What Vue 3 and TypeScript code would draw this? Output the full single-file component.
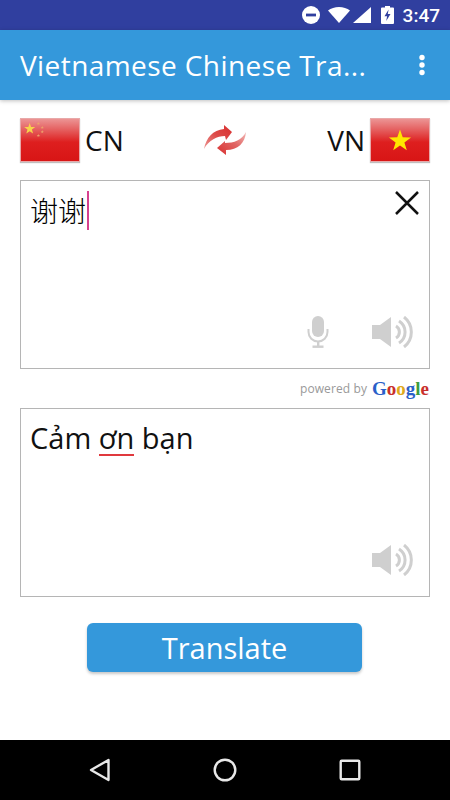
<template>
  <div class="screen">
    <!-- status bar -->
    <div class="status">
      <svg class="st-dnd" viewBox="0 0 18 18" width="18" height="18">
        <circle cx="9" cy="9" r="9" fill="#fff" />
        <rect x="4" y="7.600" width="10" height="2.800" fill="#303f9f" />
      </svg>
      <svg class="st-wifi" viewBox="0 0 22 16" width="22" height="16">
        <path d="M0 3.600C3 1.200 6.800 0 11 0s8 1.200 11 3.600L11 16z" fill="#fff" />
      </svg>
      <svg class="st-signal" viewBox="0 0 18 16" width="18" height="16">
        <path d="M0 16L18 0v16z" fill="#fff" />
      </svg>
      <svg class="st-batt" viewBox="0 0 13 18" width="13" height="18">
        <path d="M4 0h5v1.600h3a1 1 0 0 1 1 1V17a1 1 0 0 1-1 1H1a1 1 0 0 1-1-1V2.600a1 1 0 0 1 1-1h3z" fill="#fff" />
        <path d="M7.600 3.500L3.500 10.200h2.600L5.200 15l4.300-7H6.800z" fill="#303f9f" />
      </svg>
      <span class="st-time">3:47</span>
    </div>

    <!-- app bar -->
    <header class="appbar">
      <h1 class="title">Vietnamese Chinese Tra...</h1>
      <svg class="more" viewBox="0 0 6 24" width="6" height="24">
        <circle cx="3" cy="4.500" r="2.700" fill="#fff" />
        <circle cx="3" cy="12" r="2.700" fill="#fff" />
        <circle cx="3" cy="19.500" r="2.700" fill="#fff" />
      </svg>
    </header>

    <main class="content">
      <!-- language row -->
      <div class="langs">
        <div class="lang">
          <div class="flag">
            <svg viewBox="0 0 60 44" width="58" height="43">
              <polygon v-for="s in cnStars" :key="s.x + s.y" :points="starPoints(s.x, s.y, s.r)" :fill="s.c" />
            </svg>
          </div>
          <span>CN</span>
        </div>
        <svg class="swap" viewBox="7 8 46 33" width="46" height="33">
          <defs>
            <linearGradient id="arrowA" x1="0" y1="1" x2="1" y2="0">
              <stop offset="0" stop-color="#ee9a98" />
              <stop offset="0.5" stop-color="#dd4b49" />
              <stop offset="1" stop-color="#d92f2f" />
            </linearGradient>
            <linearGradient id="arrowB" x1="1" y1="0" x2="0" y2="1">
              <stop offset="0" stop-color="#f3b9b7" />
              <stop offset="0.45" stop-color="#e06563" />
              <stop offset="1" stop-color="#d92f2f" />
            </linearGradient>
          </defs>
          <path d="M9 33C11 22 18 14 29 13L29 9L37 16L31 24L30 20C22 20 14 24 9 33z" fill="url(#arrowA)" />
          <path d="M51 16C50 27 43 34 31 34L31 39L22 32L30 25L30 27C39 27 47 24 51 16z" fill="url(#arrowB)" />
        </svg>
        <div class="lang">
          <span>VN</span>
          <div class="flag">
            <svg viewBox="0 0 60 44" width="58" height="43">
              <polygon :points="starPoints(30, 22.500, 12)" fill="#ffe600" />
            </svg>
          </div>
        </div>
      </div>

      <!-- source box -->
      <section class="box">
        <div class="text cjk">谢谢<i class="caret"></i></div>
        <svg class="clear" viewBox="0 0 26 26" width="26" height="26">
          <path d="M2 2l22 22M24 2L2 24" stroke="#111" stroke-width="2.500" fill="none" />
        </svg>
        <div class="tools">
          <svg viewBox="0 0 22 32" width="22" height="32">
            <rect x="5" y="0" width="12" height="21" rx="6" fill="#cfcfcf" />
            <path d="M1.500 13v3a9.500 9.500 0 0 0 19 0v-3" fill="none" stroke="#cfcfcf" stroke-width="2" />
            <rect x="10" y="25" width="2.400" height="5" fill="#cfcfcf" />
            <rect x="5.500" y="29.500" width="11" height="2.400" fill="#cfcfcf" />
          </svg>
          <svg class="speaker" viewBox="0 0 42 32" width="42" height="32">
            <path d="M0 9h8L19 1v30L8 23H0z" fill="#cfcfcf" />
            <path d="M24 10a7 7 0 0 1 0 12M27 5a13 13 0 0 1 0 22M32 1a19 19 0 0 1 0 30" fill="none" stroke="#cfcfcf" stroke-width="3" />
          </svg>
        </div>
      </section>

      <div class="powered">
        <span>powered by</span>
        <b class="google"><i class="g-b">G</i><i class="g-r">o</i><i class="g-y">o</i><i class="g-b">g</i><i class="g-g">l</i><i class="g-r">e</i></b>
      </div>

      <!-- result box -->
      <section class="box">
        <div class="text">Cảm <span class="misspelt">ơn</span> bạn</div>
        <div class="tools">
          <svg class="speaker" viewBox="0 0 42 32" width="42" height="32">
            <path d="M0 9h8L19 1v30L8 23H0z" fill="#cfcfcf" />
            <path d="M24 10a7 7 0 0 1 0 12M27 5a13 13 0 0 1 0 22M32 1a19 19 0 0 1 0 30" fill="none" stroke="#cfcfcf" stroke-width="3" />
          </svg>
        </div>
      </section>

      <button class="translate" type="button">Translate</button>
    </main>

    <!-- nav bar -->
    <nav class="navbar">
      <svg viewBox="0 0 22 24" width="22" height="24">
        <path d="M19.500 2L2 12l17.500 10z" fill="none" stroke="#e8e8e8" stroke-width="2.400" stroke-linejoin="round" />
      </svg>
      <svg viewBox="0 0 24 24" width="24" height="24">
        <circle cx="12" cy="12" r="10.300" fill="none" stroke="#e8e8e8" stroke-width="2.400" />
      </svg>
      <svg viewBox="0 0 22 22" width="22" height="22">
        <rect x="1.700" y="1.700" width="18.600" height="18.600" rx="1" fill="none" stroke="#e8e8e8" stroke-width="2.400" />
      </svg>
    </nav>
  </div>
</template>

<script setup lang="ts">
const cnStars = [
  { x: 9, y: 10, r: 6, c: '#f7d34a' },
  { x: 18, y: 4.500, r: 1.800, c: '#eda06a' },
  { x: 22, y: 8.500, r: 1.800, c: '#eda06a' },
  { x: 22, y: 13, r: 1.800, c: '#eda06a' },
  { x: 18, y: 17, r: 1.800, c: '#eda06a' },
]

function starPoints(cx: number, cy: number, r: number): string {
  const pts: string[] = []
  for (let i = 0; i < 10; i++) {
    const rad = i % 2 === 0 ? r : r * 0.4
    const a = -Math.PI / 2 + (i * Math.PI) / 5
    pts.push(`${(cx + rad * Math.cos(a)).toFixed(2)},${(cy + rad * Math.sin(a)).toFixed(2)}`)
  }
  return pts.join(' ')
}
</script>

<style>
html, body { margin: 0; background: #fff; }
</style>

<style scoped>
.screen {
  width: 450px;
  height: 800px;
  display: flex;
  flex-direction: column;
  overflow: hidden;
  background: #fff;
  font-family: "Open Sans", "Noto Sans", sans-serif;
  color: #111;
}

/* Status bar */
.status {
  height: 30px;
  flex: none;
  background: #303f9f;
  display: flex;
  align-items: center;
  justify-content: flex-end;
  padding-right: 10px;
  box-sizing: border-box;
}
.st-dnd { margin-right: 8px; }
.st-wifi { margin-right: 3px; }
.st-signal { margin-right: 10px; }
.st-batt { margin-right: 9px; }
.st-time {
  font-family: Roboto, sans-serif;
  font-size: 19px;
  font-weight: 500;
  color: #fff;
}

/* App bar */
.appbar {
  height: 70px;
  flex: none;
  background: #3498db;
  display: flex;
  align-items: center;
  justify-content: space-between;
  padding: 0 25px 0 20px;
  box-shadow: 0 1px 4px rgba(0, 0, 0, 0.25);
  position: relative;
}
.title {
  margin: 0;
  font-size: 28px;
  font-weight: 400;
  color: #fff;
  white-space: nowrap;
  letter-spacing: 0.42px;
}

/* Content */
.content {
  flex: 1;
  display: flex;
  flex-direction: column;
  padding: 18px 20px 0;
}
.langs {
  display: flex;
  align-items: center;
  justify-content: space-between;
  height: 44px;
  margin-bottom: 18px;
}
.lang {
  display: flex;
  align-items: center;
  gap: 5px;
  font-size: 28px;
}
.flag {
  width: 60px;
  height: 44px;
  box-sizing: border-box;
  border: 1px solid #e8a9a9;
  background: linear-gradient(#ec9494 0%, #e45a5a 28%, #de1f1f 55%, #d81515 100%);
  box-shadow: 0 1px 1px rgba(0, 0, 0, 0.25);
}
.flag svg { display: block; }
.swap { display: block; margin-top: 1px; }

.box {
  height: 189px;
  box-sizing: border-box;
  border: 1px solid #b5b5b5;
  position: relative;
  display: flex;
  flex-direction: column;
  justify-content: space-between;
  padding: 9px 15px 20px 9px;
}
.text {
  font-size: 29px;
  line-height: 40px;
  height: 40px;
}
.cjk {
  font-family: "Noto Sans CJK SC", "Open Sans", sans-serif;
  font-size: 28px;
  font-weight: 300;
  color: #000;
  display: flex;
  align-items: center;
}
.caret {
  display: block;
  width: 2px;
  height: 39px;
  margin-left: 1px;
  background: #d6408f;
}
.clear {
  position: absolute;
  top: 9px;
  right: 9px;
}
.tools {
  display: flex;
  justify-content: flex-end;
  align-items: center;
  gap: 43px;
}
.speaker { display: block; }
.misspelt {
  display: inline-block;
  line-height: 32px;
  border-bottom: 2px solid #e0393e;
}

.powered {
  height: 39px;
  display: flex;
  align-items: center;
  justify-content: flex-end;
  gap: 5px;
  font-size: 12px;
  color: #999;
  letter-spacing: 0.1px;
}
.google {
  font-family: "Liberation Serif", serif;
  font-size: 19px;
  font-weight: 700;
  letter-spacing: 0;
  margin-right: 1px;
}
.google i { font-style: normal; }
.g-b { color: #2a5fc9; }
.g-r { color: #c9302c; }
.g-y { color: #e0a91c; }
.g-g { color: #3f9c3f; }

.translate {
  align-self: center;
  width: 275px;
  height: 49px;
  margin: 26px 0 0 -1px;
  border: 0;
  border-radius: 6px;
  background: #3498db;
  color: #fff;
  font-family: inherit;
  font-size: 29px;
  box-shadow: 0 2px 3px rgba(0, 0, 0, 0.22);
  padding: 0;
}

/* Nav bar */
.navbar {
  height: 60px;
  flex: none;
  background: #000;
  display: flex;
  align-items: center;
  justify-content: space-between;
  padding: 0 89px 0 89px;
}
</style>
